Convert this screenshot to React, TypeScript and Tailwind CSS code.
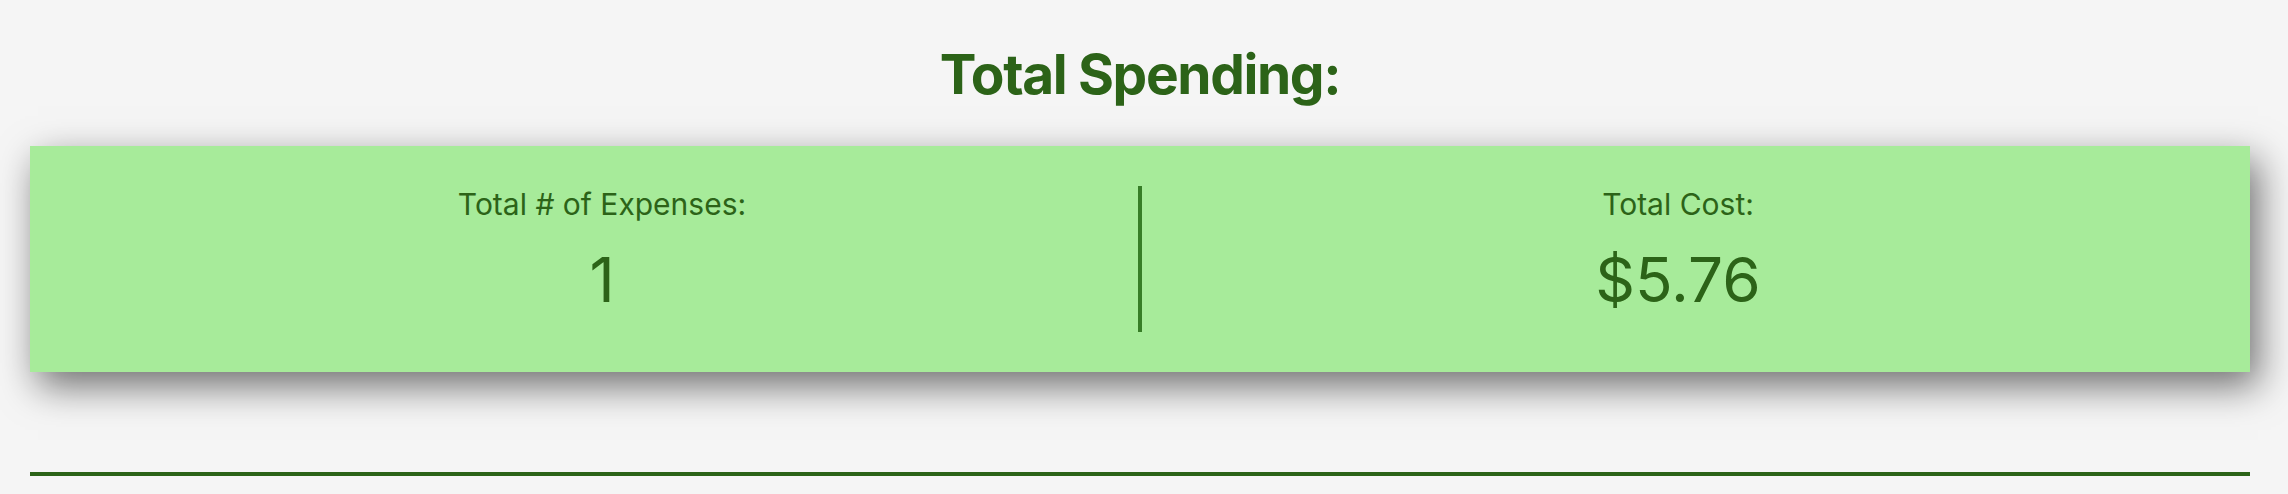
function StatColumn({ label, value }: { label: string; value: string }) {
    return (
        <div className="flex-1 flex flex-col items-center">
            <div className="text-[30px] leading-[36px]">{label}</div>
            <div className="text-[62px] leading-[75px] mt-[20px]">{value}</div>
        </div>
    );
}

function App() {
    return (
        <div className="min-h-screen bg-[#f5f5f5] text-[#2c6318] font-['Inter',sans-serif] pl-[30px] pr-[38px] pt-[41px]">
            <h1 className="text-center text-[55px] leading-[66px] font-bold tracking-[-0.025em]">Total Spending:</h1>

            <div className="mt-[39px] bg-[#a7eb9a] px-[36px] py-[40px] flex shadow-[8px_14px_36px_rgba(0,0,0,0.55)]">
                <StatColumn label="Total # of Expenses:" value="1" />
                <div className="w-[4px] h-[146px] bg-[#377d27]" />
                <StatColumn label="Total Cost:" value="$5.76" />
            </div>

            <div className="mt-[100px] h-[4px] bg-[#2c6318]" />
        </div>
    );
}

export default App;
